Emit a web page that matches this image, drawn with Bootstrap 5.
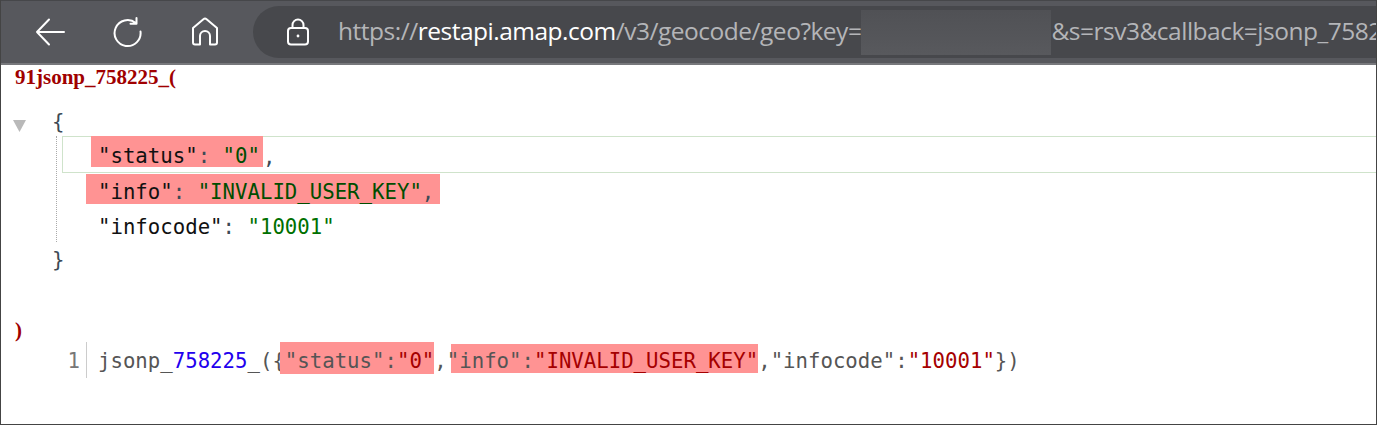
<!DOCTYPE html>
<html lang="en"><head><meta charset="utf-8"><title>restapi</title>
<link href="https://cdn.jsdelivr.net/npm/bootstrap@5.3.0/dist/css/bootstrap.min.css" rel="stylesheet">
<style>
html,body{height:425px;overflow:hidden;background:#fff}
.shot{width:1377px;height:425px;border-left:1px solid #444;border-right:1px solid #444;border-bottom:1px solid #444;overflow:hidden}
.chrome{height:65px;background:#57585d;border-top:1px solid #46474a;border-bottom:2px solid #77787c}
.tools{width:252px;padding-left:33px}
.tbtn{width:32px;height:32px;color:#fff;display:block}
.t1{margin-right:46px}.t2{margin-right:45px}
.addr{height:52px;flex:1;min-width:0;background:#47484c;border-radius:26px 0 0 26px;padding-left:33px;overflow:hidden;white-space:nowrap;font-family:"Open Sans",sans-serif;font-size:24.5px;letter-spacing:-.49px;color:#b4b5b8;line-height:50px}
.addr b{font-weight:400;color:#fff}
.utxt{padding-bottom:2px}
.lock{margin-right:28px;flex:none}
.blurk{display:inline-block;flex:none;width:190px;height:45px;background:linear-gradient(#505155,#58595d)}
.doc{font-family:"DejaVu Sans Mono",monospace;font-size:20.7px;line-height:35px;color:#111}
.jt{font-family:"Liberation Serif",serif;font-weight:700;font-size:21px;line-height:24px;height:24px;color:#a00000;padding-left:14px}
.tree{position:relative;margin-top:16px}
.arrow{position:absolute;left:12px;top:15px;width:13px;height:12px}
.ln{white-space:pre}
.open1{height:31px;padding-left:51px}
.close1{height:35px;margin-top:1px;padding-left:51px}
.nest{margin-left:55px;border-left:1px dotted #aaa}
.focus1{margin-left:5px;height:37px;border:1px solid #cfe3cb;border-right:0;padding-left:28px;line-height:40px}
.mk{display:inline-block;vertical-align:top;background:#ff9393}
.focus1 .mk{height:31px;line-height:40px;padding-left:7px;padding-right:3px;margin-top:-1px}
.rowi{padding-left:29px;height:37px}
.rowi .mk{height:30px;line-height:36px;padding-left:12px;padding-right:6px;margin-top:1px}
.rowc{padding-left:41px;height:32px;line-height:35px}
.key{color:#111}.sv{color:#004d00}.sn{color:#007000}.pn{color:#3c4a55}
.cl{padding-left:14px;height:27px;line-height:28px;margin-top:38px;color:#a00000;font-family:"Liberation Serif",serif;font-weight:700;font-size:21px}
.codeline{display:flex;height:36px;line-height:36px;color:#555}
.gut{width:79px;text-align:right;color:#777}
.sep{border-left:1px solid #ccc;margin-left:6px;padding-left:11px;white-space:pre;height:36px;margin-top:-1px;line-height:38px}
.mk1{height:32px;line-height:38px;margin-left:-5px;padding-left:5px}
.mk2{height:29px;margin-top:2px;line-height:34px;background:linear-gradient(#ff9393,#ff9393) 4px 0 no-repeat}
.c1{color:#2200ee}.c2{color:#a50000}
</style></head><body>
<div class="shot">
<div class="chrome d-flex align-items-center">
 <div class="tools d-flex align-items-center">
  <svg class="tbtn t1" viewBox="0 0 32 32" fill="none" stroke="currentColor" stroke-width="2" stroke-linecap="round" stroke-linejoin="round"><path d="M3 16H30M15 3.500 3 16 15 28.500"/></svg>
  <svg class="tbtn t2" viewBox="0 0 32 32" fill="none" stroke="currentColor" stroke-width="2" stroke-linecap="round" stroke-linejoin="round"><path d="M23.800 7A13 13 0 1 0 28.500 15.500M24.500 2V7.800H18.500"/></svg>
  <svg class="tbtn" viewBox="0 0 32 32" fill="none" stroke="currentColor" stroke-width="2" stroke-linecap="round" stroke-linejoin="round"><path d="M4 12 14.400 3.200a2.500 2.500 0 0 1 3.200 0L28 12v14.500a2 2 0 0 1-2 2H21V20a4.500 4.500 0 0 0-10 0v8.500H6a2 2 0 0 1-2-2Z"/></svg>
 </div>
 <div class="addr d-flex align-items-center">
  <svg class="lock" width="24" height="28" viewBox="0 0 24 28" fill="none" stroke="#fff" stroke-width="2"><rect x="2" y="10" width="20" height="16.500" rx="3"/><path d="M6.500 10V7a5.500 5.500 0 0 1 11 0v3"/><circle cx="12" cy="18" r="1.400" fill="#fff" stroke="none"/></svg>
  <span class="utxt">https://<b>restapi.amap.com</b>/v3/geocode/geo?key=</span><span class="blurk"></span><span class="utxt">&amp;s=rsv3&amp;callback=jsonp_758225_</span>
 </div>
</div>
<div class="jt">91jsonp_758225_(</div>
<div class="doc">
 <div class="tree">
  <svg class="arrow" viewBox="0 0 13 12"><path d="M0 0H13L6.500 12Z" fill="#b9b9b9"/></svg>
  <div class="ln open1 pn">{</div>
  <div class="nest">
   <div class="ln focus1"><span class="mk"><span class="key">"status"</span><span class="pn">: </span><span class="sv">"0"</span></span><span class="pn">,</span></div>
   <div class="ln rowi"><span class="mk"><span class="key">"info"</span><span class="pn">: </span><span class="sv">"INVALID_USER_KEY"</span><span class="pn">,</span></span></div>
   <div class="ln rowc"><span class="key">"infocode"</span><span class="pn">: </span><span class="sn">"10001"</span></div>
  </div>
  <div class="ln close1 pn">}</div>
 </div>
 <div class="cl">)</div>
 <div class="codeline"><div class="gut">1</div><div class="sep">jsonp_<span class="c1">758225</span>_({<span class="mk mk1">"status":<span class="c2">"0"</span></span>,<span class="mk mk2">"info":<span class="c2">"INVALID_USER_KEY"</span></span>,"infocode":<span class="c2">"10001"</span>})</div></div>
</div>
</div>
</body></html>
